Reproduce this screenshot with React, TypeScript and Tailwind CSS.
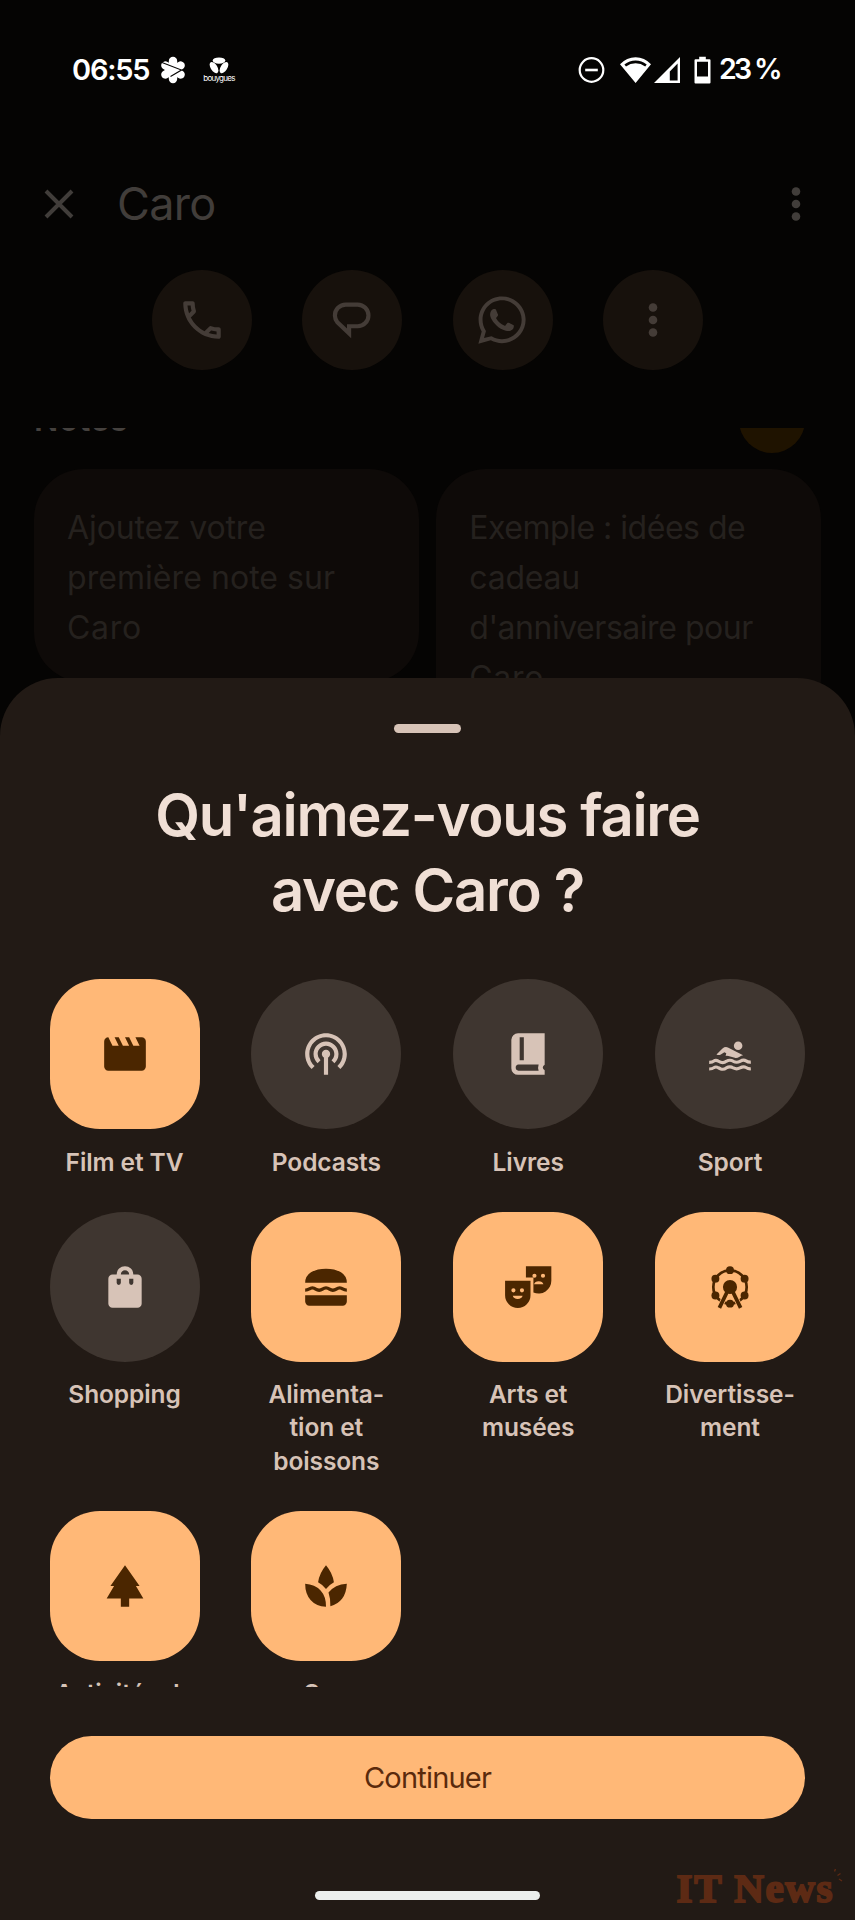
import type { ReactNode } from "react";
import { MdOutlinePhone, MdPodcasts } from "react-icons/md";
import { FaWhatsapp } from "react-icons/fa";

function Dots({ className }: { className: string }) {
  return (
    <svg className={className} viewBox="0 0 10 34" fill="currentColor">
      <circle cx="5" cy="4.5" r="4.3" />
      <circle cx="5" cy="17" r="4.3" />
      <circle cx="5" cy="29.5" r="4.3" />
    </svg>
  );
}

function StatusBar() {
  return (
    <div className="flex h-[139px] items-center pl-[72px] pr-[73px] text-white">
      <span className="w-[79px] whitespace-nowrap text-[29px] font-semibold tracking-[-1.2px]">06:55</span>
      <svg className="ml-[9px] h-[28px] w-[26px]" viewBox="-13 -14 26 28">
        <g stroke="#fff" strokeWidth="8.4" strokeLinecap="round">
          <path d="M0-9V9" />
          <path d="M-7.6-4.5L7.6 4.500" />
          <path d="M7.600-4.500L-7.600 4.500" />
        </g>
        <path d="M-11-7.500L8.500 0L-2.500 6.500" fill="none" stroke="#050403" strokeWidth="1.100" />
      </svg>
      <div className="ml-[16px] flex w-[34px] flex-col items-center pt-[1px]">
        <svg className="h-[17px] w-[20px]" viewBox="0 0 20 17" fill="#fff">
          <ellipse cx="10" cy="3.6" rx="6.3" ry="3.2" />
          <ellipse cx="5" cy="10.6" rx="6.3" ry="3.3" transform="rotate(58 5 10.6)" />
          <ellipse cx="15" cy="10.6" rx="6.3" ry="3.3" transform="rotate(-58 15 10.6)" />
        </svg>
        <span className="whitespace-nowrap text-[8px] leading-[9px] tracking-[-0.75px]">bouygues</span>
      </div>
      <div className="ml-auto flex items-center">
        <svg className="h-[28px] w-[27px]" viewBox="0 0 27 28" fill="none" stroke="#fff" strokeWidth="2.2">
          <circle cx="13.5" cy="14" r="11.8" />
          <path d="M7.2 14h12.6" strokeWidth="2.6" />
        </svg>
        <svg className="ml-[15px] h-[28px] w-[61px]" viewBox="0 0 61 28" fill="#fff">
          <path
            fillRule="evenodd"
            d="M0 8.2Q6.7 1.2 15.6 1.2T31 8.2L15.6 27ZM4.4 8.6Q9.5 4.6 15.6 4.6T26.7 8.6L25.2 10.4Q21 7.3 15.6 7.3T6 10.4Z"
          />
          <path fillRule="evenodd" d="M60 1V27H34ZM57.6 7.5L49.8 15.5V24.6H57.6Z" />
        </svg>
        <svg className="ml-[13px] h-[28px] w-[17px]" viewBox="0 0 17 28" fill="#fff">
          <path
            fillRule="evenodd"
            d="M5.2.8h6.6v2.4h3.7q1 0 1 1v22.4q0 1-1 1h-14q-1 0-1-1V4.2q0-1 1-1h3.7zM3 5.8v14.6h11V5.8z"
          />
        </svg>
        <span className="ml-[8px] w-[63px] whitespace-nowrap text-[28.5px] font-semibold tracking-[-2.7px]">23 %</span>
      </div>
    </div>
  );
}

function MessageIcon() {
  return (
    <svg className="size-[50px]" viewBox="0 0 24 24" fill="none" stroke="currentColor" strokeWidth="2">
      <path d="M10.6 18.4V15h4.1a5.2 5.2 0 0 0 0-10.4H9a5.2 5.2 0 0 0-5.2 5.3q0 1.8 1.2 3.2z" />
    </svg>
  );
}

function RoundAction({ children }: { children: ReactNode }) {
  return (
    <div className="flex size-[100px] items-center justify-center rounded-full bg-[#17110c] text-[#443c37]">
      {children}
    </div>
  );
}

function Backdrop() {
  return (
    <div>
      <StatusBar />
      <div className="flex h-[131px] items-start pl-[44px] pr-[54px] pt-[37.5px] text-[#413d3a]">
        <svg className="mt-[12px] size-[30px]" viewBox="0 0 30 30" fill="none" stroke="currentColor" strokeWidth="4">
          <path d="M2 2L28 28M28 2L2 28" />
        </svg>
        <span className="ml-[43px] text-[45px] leading-[54px] tracking-[-0.7px]">Caro</span>
        <Dots className="ml-auto mt-[10px] h-[34px] w-[10px]" />
      </div>
      <div className="flex justify-center gap-[50.4px]">
        <RoundAction>
          <MdOutlinePhone className="size-[50px]" />
        </RoundAction>
        <RoundAction>
          <MessageIcon />
        </RoundAction>
        <RoundAction>
          <FaWhatsapp className="mr-[1px] size-[54px]" />
        </RoundAction>
        <RoundAction>
          <Dots className="h-[34px] w-[10px]" />
        </RoundAction>
      </div>
      <div className="mt-[58px] flex h-[25px] items-end justify-between overflow-hidden pl-[34px] pr-[50px]">
        <span className="mb-[13px] text-[32px] font-semibold leading-[40px] tracking-[0.6px] text-[#45413e]">
          Notes
        </span>
        <div className="size-[66px] shrink-0 rounded-full bg-[#1f1300]" />
      </div>
      <div className="mt-[16px] flex items-start gap-[17px] px-[34px] text-[32px] leading-[50px] text-[#25211e]">
        <div className="h-[213px] w-[385.500px] rounded-[50px] bg-[#0e0a08] pl-[33px] pt-[34px]">
          <div className="tracking-[-0.1px]">Ajoutez votre</div>
          <div className="tracking-[0.06px]">première note sur</div>
          <div className="tracking-[0.7px]">Caro</div>
        </div>
        <div className="h-[260px] w-[385px] rounded-[50px] bg-[#0e0a08] pl-[33px] pt-[34px]">
          <div className="tracking-[-0.48px]">Exemple : idées de</div>
          <div className="tracking-[-0.2px]">cadeau</div>
          <div className="tracking-[-0.46px]">d'anniversaire pour</div>
          <div className="tracking-[0.7px]">Caro</div>
        </div>
      </div>
    </div>
  );
}

const svgProps = { className: "size-[50px]", viewBox: "0 0 24 24", fill: "currentColor" };

const FilmIcon = (
  <svg {...svgProps}>
    <path d="M4 4l2 4h3L7 4h2l2 4h3l-2-4h2l2 4h3l-2-4h3q.825 0 1.413.588T22 6v12q0 .825-.587 1.413T20 20H4q-.825 0-1.412-.587T2 18V6q0-.825.588-1.412T4 4" />
  </svg>
);
const BookIcon = (
  <svg {...svgProps}>
    <path
      fillRule="evenodd"
      d="M7.2 2H20v15.2q-.9.5-.9 1.3t.9 1.3V22H7.2Q5.9 22 4.95 21.1T4 18.8V5.2Q4 3.9 4.95 2.95T7.2 2M8 4v11h2V4zM7.4 17q-1.3.1-1.3 1.5T7.4 20h9.7q-.5-1.5 0-3z"
    />
  </svg>
);
const SwimIcon = (
  <svg {...svgProps}>
    <circle cx="15.9" cy="8" r="2.05" />
    <path d="M5.5 12.2l2.900-2.800Q9.700 8.300 11 8.900l7.300 3.700q-.9.200-1.700.7-1.300.8-2.300.5l-3.100-.8q-.7-.2-1.300 0l.3-1.300-.9-.5-1.700 1q-.9.500-2.100 0" />
    <path
      d="M2 16q1.600 0 2.200-.6 1-.7 2.200 0l1.200.6q1.500.4 2.600-.5 1.800-1 3.400 0 1.600.9 3.200 0 1.700-1 2.900-.2 1 .7 2.300.6M2 19.200q1.600 0 2.200-.6 1-.7 2.200 0l1.200.6q1.500.4 2.600-.5 1.800-1 3.400 0 1.600.9 3.200 0 1.700-1 2.900-.2 1 .7 2.300.6"
      fill="none"
      stroke="currentColor"
      strokeWidth="1.5"
    />
  </svg>
);
const BagIcon = (
  <svg {...svgProps}>
    <path
      fillRule="evenodd"
      d="M6 6h2a4 4 0 0 1 8 0h2q.83 0 1.4.6T20 8v12q0 .83-.6 1.4T18 22H6q-.83 0-1.4-.6T4 20V8q0-.83.6-1.4T6 6M10 6h4a2 2 0 0 0-4 0M8 8v2a1 1 0 0 0 2 0V8zM14 8v2a1 1 0 0 0 2 0V8z"
    />
  </svg>
);
const BurgerIcon = (
  <svg {...svgProps}>
    <path d="M2 10q0-3.3 2.8-5.05T12 3.2t7.200 1.750T22 10zM2 16h20v3q0 .83-.6 1.400T20 21H4q-.83 0-1.400-.6T2 19z" />
    <path
      d="M2 13.500q1.200 0 1.800-.5 1.700-1.200 3.300 0 1.600 1.100 3.200 0 1.700-1.200 3.400 0 1.600 1.100 3.200 0 1.700-1.200 3.300 0 .6.500 1.800.5"
      fill="none"
      stroke="currentColor"
      strokeWidth="1.600"
    />
  </svg>
);
const MasksIcon = (
  <svg className="size-[50px] overflow-visible" viewBox="0 0 24 24" fill="currentColor">
    <path
      fillRule="evenodd"
      d="M1 9h12.2v7a6.1 6.1 0 0 1-12.2 0zM5 12.6a1 1 0 1 0 0 2 1 1 0 0 0 0-2M9.1 12.6a1 1 0 1 0 0 2 1 1 0 0 0 0-2M4.700 16.200a2.400 1.900 0 0 0 4.700 0z"
    />
    <path
      fillRule="evenodd"
      d="M11 2h12.200v7a6.100 6.100 0 0 1-8.600 5.600V7.400H11zM15.100 5.600a1 1 0 1 0 0 2 1 1 0 0 0 0-2M19.200 5.600a1 1 0 1 0 0 2 1 1 0 0 0 0-2M14.900 10.700h4.500a2.300 1.900 0 0 0-4.500 0z"
    />
  </svg>
);
const WheelIcon = (
  <svg {...svgProps}>
    <circle cx="12" cy="12" r="8" fill="none" stroke="currentColor" strokeWidth="1.300" />
    <circle cx="12" cy="3.900" r="1.900" />
    <circle cx="5" cy="8" r="1.900" />
    <circle cx="19" cy="8" r="1.900" />
    <circle cx="5" cy="16.100" r="1.900" />
    <circle cx="19" cy="16.100" r="1.900" />
    <circle cx="12" cy="20" r="1.900" />
    <path d="M12 11.500L6.900 22M12 11.500L17.100 22" fill="none" stroke="#ffb877" strokeWidth="2.600" />
    <path d="M12 11.500L6.900 22M12 11.500L17.100 22" fill="none" stroke="currentColor" strokeWidth="1.800" />
    <circle cx="12" cy="12" r="3.400" />
  </svg>
);
const TreeIcon = (
  <svg {...svgProps}>
    <path d="M10 22v-4H3.200l3.550-6H5l7-10 7 10h-1.750l3.550 6H14v4z" />
  </svg>
);
const SpaIcon = (
  <svg {...svgProps}>
    <path d="M12 2q3.200 3.800 3.800 8.200Q13.600 11.400 12 13.400 10.400 11.400 8.200 10.200 8.800 5.800 12 2M2 10.900q4.700.3 7.400 3.200T12 22q-4.800-.3-7.400-3.300T2 10.900M22 10.900q-.2 4.500-2.300 7.200T14.100 21.700q.1-3.700-.9-6.600Q16.200 11.300 22 10.900" />
  </svg>
);

type Item = { label: string[]; icon: ReactNode; on?: boolean };

const items: Item[] = [
  { label: ["Film et TV"], icon: FilmIcon, on: true },
  { label: ["Podcasts"], icon: <MdPodcasts className="size-[50px]" /> },
  { label: ["Livres"], icon: BookIcon },
  { label: ["Sport"], icon: SwimIcon },
  { label: ["Shopping"], icon: BagIcon },
  { label: ["Alimenta-", "tion et", "boissons"], icon: BurgerIcon, on: true },
  { label: ["Arts et", "musées"], icon: MasksIcon, on: true },
  { label: ["Divertisse-", "ment"], icon: WheelIcon, on: true },
  { label: ["Activités de"], icon: TreeIcon, on: true },
  { label: ["Spa"], icon: SpaIcon, on: true },
];

function Tile({ item }: { item: Item }) {
  return (
    <div className="flex flex-col items-center">
      <div
        className={
          item.on
            ? "flex size-[150px] items-center justify-center rounded-[50px] bg-[#ffb877] text-[#4b2600]"
            : "flex size-[150px] items-center justify-center rounded-full bg-[#3f3630] text-[#d7c3b7]"
        }
      >
        {item.icon}
      </div>
      <div className="mt-[16.5px] pb-[33px] text-center text-[24.5px] font-semibold leading-[33.2px] tracking-[-0.1px] text-[#d7c3b7]">
        {item.label.map((line) => (
          <div key={line} className="whitespace-nowrap">
            {line}
          </div>
        ))}
      </div>
    </div>
  );
}

function Sheet() {
  return (
    <div className="absolute inset-x-0 bottom-0 flex h-[1242px] flex-col items-center rounded-t-[58px] bg-[#221a15]">
      <div className="mt-[45.5px] h-[9.5px] w-[67px] rounded-full bg-[#d7c3b7]" />
      <h1 className="mt-[44.5px] text-center text-[58px] font-semibold leading-[75px] tracking-[-1.3px] text-[#f0dfd5]">
        Qu'aimez-vous faire
        <br />
        avec Caro ?
      </h1>
      <div className="mt-[51.5px] h-[707.5px] w-full overflow-hidden pl-[49.5px] pr-[50px]">
        <div className="grid grid-cols-[repeat(4,150px)] justify-between">
          {items.map((item) => (
            <Tile key={item.label[0]} item={item} />
          ))}
        </div>
      </div>
      <button className="mt-[49px] flex h-[83.5px] w-[755px] shrink-0 items-center justify-center rounded-full bg-[#ffb877] text-[29px] tracking-[-0.8px] text-[#5a2a0c]">
        Continuer
      </button>
      <div className="mt-auto grid w-full grid-cols-[1fr_225px_1fr] items-end pb-[12px]">
        <div />
        <div className="mb-[8px] h-[9px] rounded-full bg-[#ecefed]" />
        <div className="flex items-start justify-end pr-[12px] text-[#5d2a14]">
          <span className="whitespace-nowrap font-['Liberation_Serif',serif] text-[41px] font-bold leading-[40px] tracking-[1.6px] [-webkit-text-stroke:2px_#5d2a14]">
            IT News
          </span>
          <svg className="h-[16px] w-[9px]" viewBox="0 0 9 16" fill="none" stroke="currentColor" strokeWidth="1.4">
            <path d="M1.5 1l-1 2.5M6.5 5.5l-3 2M5 11l3 2" />
          </svg>
        </div>
      </div>
    </div>
  );
}

export default function App() {
  return (
    <div className="relative h-[1920px] w-[855px] overflow-hidden bg-[#050403] font-['Inter',sans-serif]">
      <Backdrop />
      <Sheet />
    </div>
  );
}
